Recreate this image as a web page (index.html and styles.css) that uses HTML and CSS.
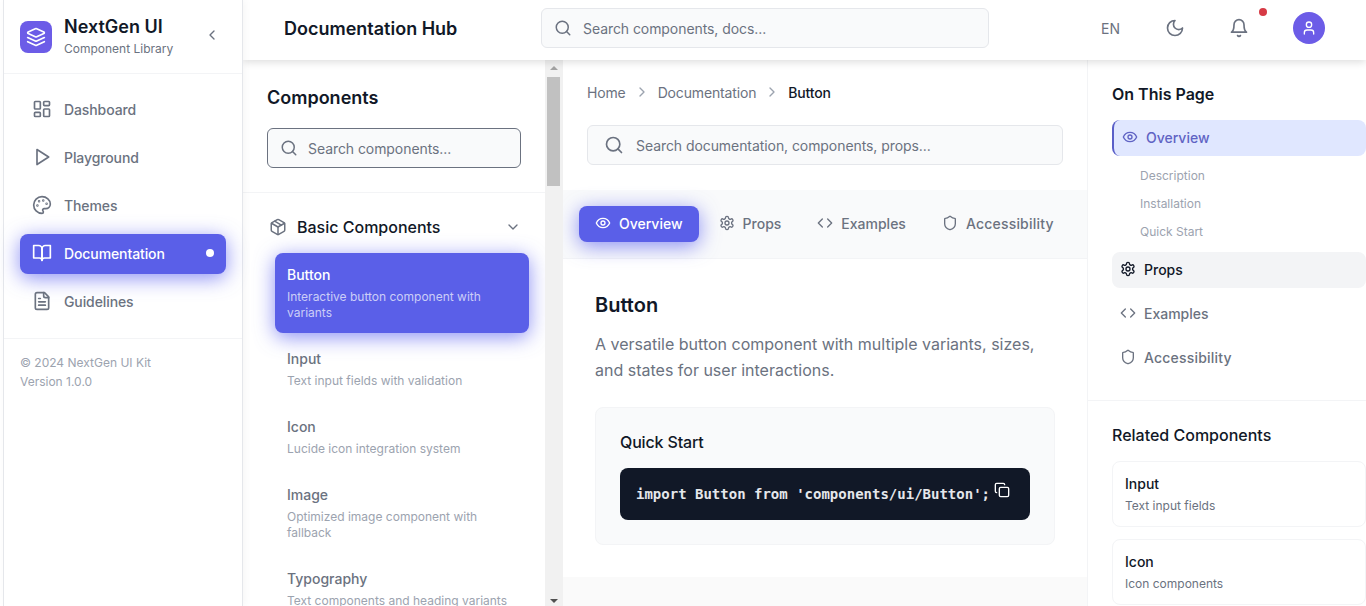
FILE: index.html
```html
<!DOCTYPE html>
<html lang="en">
<head>
    <meta charset="UTF-8">
    <meta name="viewport" content="width=device-width, initial-scale=1.0">
    <title>NextGen UI - Documentation Hub</title>
    <link rel="stylesheet" href="styles.css">
</head>
<body>

    <svg class="sprite" aria-hidden="true">
        <symbol id="i-layers" viewBox="0 0 24 24"><path d="m12.83 2.18a2 2 0 0 0-1.66 0L2.6 6.08a1 1 0 0 0 0 1.83l8.58 3.91a2 2 0 0 0 1.66 0l8.58-3.9a1 1 0 0 0 0-1.83Z"/><path d="m22 17.65-9.17 4.16a2 2 0 0 1-1.66 0L2 17.65"/><path d="m22 12.65-9.17 4.16a2 2 0 0 1-1.66 0L2 12.65"/></symbol>
        <symbol id="i-left" viewBox="0 0 24 24"><path d="m15 18-6-6 6-6"/></symbol>
        <symbol id="i-right" viewBox="0 0 24 24"><path d="m9 18 6-6-6-6"/></symbol>
        <symbol id="i-down" viewBox="0 0 24 24"><path d="m6 9 6 6 6-6"/></symbol>
        <symbol id="i-dashboard" viewBox="0 0 24 24"><rect x="3" y="3" width="7" height="9" rx="1"/><rect x="14" y="3" width="7" height="5" rx="1"/><rect x="14" y="12" width="7" height="9" rx="1"/><rect x="3" y="16" width="7" height="5" rx="1"/></symbol>
        <symbol id="i-play" viewBox="0 0 24 24"><polygon points="6 3 20 12 6 21 6 3"/></symbol>
        <symbol id="i-palette" viewBox="0 0 24 24"><circle cx="13.5" cy="6.5" r=".5"/><circle cx="17.5" cy="10.5" r=".5"/><circle cx="8.5" cy="7.5" r=".5"/><circle cx="6.5" cy="12.5" r=".5"/><path d="M12 2C6.5 2 2 6.5 2 12s4.5 10 10 10c.926 0 1.648-.746 1.648-1.688 0-.437-.18-.835-.437-1.125-.29-.289-.438-.652-.438-1.125a1.64 1.64 0 0 1 1.668-1.668h1.996c3.051 0 5.555-2.503 5.555-5.554C21.965 6.012 17.461 2 12 2z"/></symbol>
        <symbol id="i-book" viewBox="0 0 24 24"><path d="M2 3h6a4 4 0 0 1 4 4v14a3 3 0 0 0-3-3H2z"/><path d="M22 3h-6a4 4 0 0 0-4 4v14a3 3 0 0 1 3-3h7z"/></symbol>
        <symbol id="i-file" viewBox="0 0 24 24"><path d="M15 2H6a2 2 0 0 0-2 2v16a2 2 0 0 0 2 2h12a2 2 0 0 0 2-2V7Z"/><path d="M14 2v4a2 2 0 0 0 2 2h4"/><path d="M10 9H8"/><path d="M16 13H8"/><path d="M16 17H8"/></symbol>
        <symbol id="i-search" viewBox="0 0 24 24"><circle cx="11" cy="11" r="8"/><path d="m21 21-4.3-4.3"/></symbol>
        <symbol id="i-moon" viewBox="0 0 24 24"><path d="M12 3a6 6 0 0 0 9 9 9 9 0 1 1-9-9Z"/></symbol>
        <symbol id="i-bell" viewBox="0 0 24 24"><path d="M6 8a6 6 0 0 1 12 0c0 7 3 9 3 9H3s3-2 3-9"/><path d="M10.3 21a1.94 1.94 0 0 0 3.4 0"/></symbol>
        <symbol id="i-user" viewBox="0 0 24 24"><path d="M19 21v-2a4 4 0 0 0-4-4H9a4 4 0 0 0-4 4v2"/><circle cx="12" cy="7" r="4"/></symbol>
        <symbol id="i-eye" viewBox="0 0 24 24"><path d="M2 12s3-7 10-7 10 7 10 7-3 7-10 7-10-7-10-7Z"/><circle cx="12" cy="12" r="3"/></symbol>
        <symbol id="i-settings" viewBox="0 0 24 24"><path d="M12.22 2h-.44a2 2 0 0 0-2 2v.18a2 2 0 0 1-1 1.73l-.43.25a2 2 0 0 1-2 0l-.15-.08a2 2 0 0 0-2.73.73l-.22.38a2 2 0 0 0 .73 2.73l.15.1a2 2 0 0 1 1 1.72v.51a2 2 0 0 1-1 1.74l-.15.09a2 2 0 0 0-.73 2.73l.22.38a2 2 0 0 0 2.73.73l.15-.08a2 2 0 0 1 2 0l.43.25a2 2 0 0 1 1 1.73V20a2 2 0 0 0 2 2h.44a2 2 0 0 0 2-2v-.18a2 2 0 0 1 1-1.73l.43-.25a2 2 0 0 1 2 0l.15.08a2 2 0 0 0 2.73-.73l.22-.39a2 2 0 0 0-.73-2.73l-.15-.08a2 2 0 0 1-1-1.74v-.5a2 2 0 0 1 1-1.74l.15-.09a2 2 0 0 0 .73-2.73l-.22-.38a2 2 0 0 0-2.73-.73l-.15.08a2 2 0 0 1-2 0l-.43-.25a2 2 0 0 1-1-1.73V4a2 2 0 0 0-2-2z"/><circle cx="12" cy="12" r="3"/></symbol>
        <symbol id="i-code" viewBox="0 0 24 24"><polyline points="16 18 22 12 16 6"/><polyline points="8 6 2 12 8 18"/></symbol>
        <symbol id="i-shield" viewBox="0 0 24 24"><path d="M20 13c0 5-3.5 7.5-7.66 8.95a1 1 0 0 1-.67-.01C7.5 20.5 4 18 4 13V6a1 1 0 0 1 1-1c2 0 4.5-1.2 6.24-2.72a1.17 1.17 0 0 1 1.52 0C14.51 3.81 17 5 19 5a1 1 0 0 1 1 1z"/></symbol>
        <symbol id="i-package" viewBox="0 0 24 24"><path d="M11 21.73a2 2 0 0 0 2 0l7-4A2 2 0 0 0 21 16V8a2 2 0 0 0-1-1.73l-7-4a2 2 0 0 0-2 0l-7 4A2 2 0 0 0 3 8v8a2 2 0 0 0 1 1.73z"/><path d="M12 22V12"/><path d="m3.3 7 8.7 5 8.7-5"/><path d="m7.5 4.27 9 5.15"/></symbol>
        <symbol id="i-copy" viewBox="0 0 24 24"><rect x="8" y="8" width="14" height="14" rx="2"/><path d="M4 16c-1.1 0-2-.9-2-2V4c0-1.1.9-2 2-2h10c1.1 0 2 .9 2 2"/></symbol>
    </svg>

    <div class="app">
        <aside class="sidebar">
            <div class="brand">
                <div class="brand-logo"><svg class="icon icon-20"><use href="#i-layers"/></svg></div>
                <div class="brand-text">
                    <div class="brand-name">NextGen UI</div>
                    <div class="brand-sub">Component Library</div>
                </div>
                <svg class="icon icon-16 brand-toggle"><use href="#i-left"/></svg>
            </div>

            <nav class="nav">
                <a class="nav-item"><svg class="icon icon-20"><use href="#i-dashboard"/></svg>Dashboard</a>
                <a class="nav-item"><svg class="icon icon-20"><use href="#i-play"/></svg>Playground</a>
                <a class="nav-item"><svg class="icon icon-20"><use href="#i-palette"/></svg>Themes</a>
                <a class="nav-item active"><svg class="icon icon-20"><use href="#i-book"/></svg>Documentation<span class="nav-dot"></span></a>
                <a class="nav-item"><svg class="icon icon-20"><use href="#i-file"/></svg>Guidelines</a>
            </nav>

            <div class="sidebar-foot">
                <div>© 2024 NextGen UI Kit</div>
                <div>Version 1.0.0</div>
            </div>
        </aside>

        <div class="page">
            <header class="topbar">
                <h1 class="topbar-title">Documentation Hub</h1>
                <div class="search topbar-search">
                    <svg class="icon icon-18"><use href="#i-search"/></svg>
                    <span>Search components, docs...</span>
                </div>
                <div class="topbar-actions">
                    <span class="lang">EN</span>
                    <svg class="icon icon-20 act-moon"><use href="#i-moon"/></svg>
                    <span class="bell">
                        <svg class="icon icon-20"><use href="#i-bell"/></svg>
                        <span class="bell-dot"></span>
                    </span>
                    <span class="avatar"><svg class="icon icon-16"><use href="#i-user"/></svg></span>
                </div>
            </header>

            <div class="columns">
                <section class="library">
                    <div class="library-scroll">
                        <div class="library-head">
                            <h2>Components</h2>
                            <div class="search library-search">
                                <svg class="icon icon-18"><use href="#i-search"/></svg>
                                <span>Search components...</span>
                            </div>
                        </div>

                        <div class="group">
                            <div class="group-head">
                                <svg class="icon icon-18"><use href="#i-package"/></svg>
                                <span>Basic Components</span>
                                <svg class="icon icon-16 group-chev"><use href="#i-down"/></svg>
                            </div>
                            <div class="group-items">
                                <div class="comp active">
                                    <div class="comp-name">Button</div>
                                    <div class="comp-desc">Interactive button component with variants</div>
                                </div>
                                <div class="comp">
                                    <div class="comp-name">Input</div>
                                    <div class="comp-desc">Text input fields with validation</div>
                                </div>
                                <div class="comp">
                                    <div class="comp-name">Icon</div>
                                    <div class="comp-desc">Lucide icon integration system</div>
                                </div>
                                <div class="comp">
                                    <div class="comp-name">Image</div>
                                    <div class="comp-desc">Optimized image component with fallback</div>
                                </div>
                                <div class="comp">
                                    <div class="comp-name">Typography</div>
                                    <div class="comp-desc">Text components and heading variants</div>
                                </div>
                            </div>
                        </div>
                    </div>

                    <div class="scrollbar">
                        <span class="scroll-arrow up"></span>
                        <span class="scroll-thumb"></span>
                        <span class="scroll-track"></span>
                        <span class="scroll-arrow down"></span>
                    </div>
                </section>

                <main class="doc">
                    <div class="doc-head">
                        <div class="crumbs">
                            <span>Home</span>
                            <svg class="icon icon-16"><use href="#i-right"/></svg>
                            <span>Documentation</span>
                            <svg class="icon icon-16"><use href="#i-right"/></svg>
                            <span class="crumb-current">Button</span>
                        </div>
                        <div class="search doc-search">
                            <svg class="icon icon-20"><use href="#i-search"/></svg>
                            <span>Search documentation, components, props...</span>
                        </div>
                    </div>

                    <div class="tabs">
                        <a class="tab active"><svg class="icon icon-16"><use href="#i-eye"/></svg>Overview</a>
                        <a class="tab"><svg class="icon icon-16"><use href="#i-settings"/></svg>Props</a>
                        <a class="tab"><svg class="icon icon-16"><use href="#i-code"/></svg>Examples</a>
                        <a class="tab wide"><svg class="icon icon-16"><use href="#i-shield"/></svg>Accessibility</a>
                    </div>

                    <div class="doc-body">
                        <h2>Button</h2>
                        <p>A versatile button component with multiple variants, sizes, and states for user interactions.</p>
                        <div class="quick">
                            <h3>Quick Start</h3>
                            <div class="code">
                                <code>import Button from 'components/ui/Button';</code>
                                <svg class="icon icon-16 code-copy"><use href="#i-copy"/></svg>
                            </div>
                        </div>
                    </div>

                    <div class="doc-next"></div>
                </main>

                <aside class="toc">
                    <div class="toc-main">
                        <h3>On This Page</h3>
                        <a class="toc-item active"><svg class="icon icon-16"><use href="#i-eye"/></svg>Overview</a>
                        <div class="toc-sub">
                            <a>Description</a>
                            <a>Installation</a>
                            <a>Quick Start</a>
                        </div>
                        <div class="toc-list">
                            <a class="toc-item hover"><svg class="icon icon-16"><use href="#i-settings"/></svg>Props</a>
                            <a class="toc-item"><svg class="icon icon-16"><use href="#i-code"/></svg>Examples</a>
                            <a class="toc-item wide"><svg class="icon icon-16"><use href="#i-shield"/></svg>Accessibility</a>
                        </div>
                    </div>
                    <div class="related">
                        <h3>Related Components</h3>
                        <div class="related-card">
                            <div class="related-name">Input</div>
                            <div class="related-desc">Text input fields</div>
                        </div>
                        <div class="related-card">
                            <div class="related-name">Icon</div>
                            <div class="related-desc">Icon components</div>
                        </div>
                    </div>
                </aside>
            </div>
        </div>
    </div>

</body>
</html>
```

FILE: styles.css
```css
* {
    box-sizing: border-box;
}

html, body {
    height: 100%;
}

body {
    margin: 0;
    font-family: Inter, "Noto Sans", sans-serif;
    font-size: 14px;
    color: #111827;
    background: #fff;
    overflow: hidden;
}

h1, h2, h3, p {
    margin: 0;
}

.sprite {
    display: none;
}

.icon {
    flex: none;
    fill: none;
    stroke: currentColor;
    stroke-width: 2;
    stroke-linecap: round;
    stroke-linejoin: round;
}

.icon-16 { width: 16px; height: 16px; }
.icon-18 { width: 18px; height: 18px; }
.icon-20 { width: 20px; height: 20px; }

.wide {
    letter-spacing: 0.2px;
}

.app {
    display: flex;
    height: 606px;
    padding-left: 3px;
}

/* left sidebar */
.sidebar {
    position: relative;
    z-index: 3;
    flex: none;
    width: 240px;
    background: #fff;
    border-left: 1px solid #e5e7eb;
    border-right: 1px solid #e5e7eb;
    box-shadow: 2px 0 8px rgba(0, 0, 0, 0.04);
}

.brand {
    display: flex;
    align-items: center;
    height: 74px;
    padding: 0 16px;
    border-bottom: 1px solid #f3f4f6;
}

.brand-logo {
    display: flex;
    align-items: center;
    justify-content: center;
    width: 32px;
    height: 32px;
    margin-right: 12px;
    border-radius: 8px;
    background: #6c5ce7;
    color: #fff;
}

.brand-text {
    flex: 1;
}

.brand-name {
    font-size: 18px;
    font-weight: 600;
    line-height: 24px;
}

.brand-sub {
    margin-top: 1px;
    font-size: 12px;
    line-height: 18px;
    color: #6b7280;
}

.brand-toggle {
    margin: 0 6px 4px 0;
    color: #6b7280;
}

.nav {
    display: flex;
    flex-direction: column;
    gap: 8px;
    padding: 16px 16px;
    border-bottom: 1px solid #f3f4f6;
}

.nav-item {
    display: flex;
    align-items: center;
    gap: 12px;
    height: 40px;
    padding: 0 12px 2px;
    border-radius: 8px;
    font-weight: 500;
    letter-spacing: -0.1px;
    color: #6b7280;
}

.nav-item.active {
    background: #5a5fe8;
    color: #fff;
    box-shadow: 0 4px 20px rgba(90, 95, 240, 0.7);
}

.nav-dot {
    width: 8px;
    height: 8px;
    margin-left: auto;
    border-radius: 50%;
    background: #fff;
}

.sidebar-foot {
    padding: 14px 16px;
    font-size: 12px;
    line-height: 19px;
    color: #9ca3af;
}

/* top bar */
.page {
    flex: 1;
    display: flex;
    flex-direction: column;
    min-width: 0;
}

.topbar {
    position: relative;
    z-index: 2;
    flex: none;
    display: flex;
    align-items: center;
    height: 60px;
    padding: 0 41px 4px 41px;
    background: #fff;
    box-shadow: 0 2px 8px rgba(0, 0, 0, 0.14);
}

.topbar-title {
    width: 257px;
    font-size: 18px;
    font-weight: 600;
}

.search {
    display: flex;
    align-items: center;
    background: #f9fafb;
    border: 1px solid #e5e7eb;
    border-radius: 6px;
    color: #6b7280;
}

.search span {
    letter-spacing: -0.07px;
}

.topbar-search {
    gap: 11px;
    width: 448px;
    height: 40px;
    padding: 0 12px;
}

.topbar-actions {
    display: flex;
    align-items: center;
    margin-left: auto;
    color: #6b7280;
}

.lang {
    margin-right: 45px;
}

.act-moon {
    margin-right: 44px;
}

.bell {
    position: relative;
    display: flex;
    margin-right: 44px;
}

.bell-dot {
    position: absolute;
    top: -10px;
    right: -18px;
    width: 8px;
    height: 8px;
    border-radius: 50%;
    background: #d63a45;
}

.avatar {
    display: flex;
    align-items: center;
    justify-content: center;
    width: 32px;
    height: 32px;
    border-radius: 50%;
    background: #6c5ce7;
    color: #fff;
}

.columns {
    flex: 1;
    display: flex;
    min-height: 0;
}

/* component list */
.library {
    flex: none;
    display: flex;
    width: 320px;
}

.library-scroll {
    flex: 1;
    min-width: 0;
    overflow: hidden;
}

.library-head {
    padding: 26px 24px 24px;
    border-bottom: 1px solid #f3f4f6;
}

.library-head h2 {
    margin-bottom: 18px;
    font-size: 18px;
    font-weight: 600;
    line-height: 24px;
}

.library-search {
    gap: 10px;
    height: 40px;
    padding: 0 12px;
    border-color: #6b7280;
}

.group {
    padding: 23px 24px 0;
}

.group-head {
    display: flex;
    align-items: center;
    gap: 10px;
    height: 22px;
    margin-bottom: 15px;
    padding-left: 2px;
    font-size: 16px;
    font-weight: 500;
}

.group-head > .icon:first-child {
    color: #6b7280;
}

.group-chev {
    margin-left: auto;
    color: #6b7280;
}

.group-items {
    display: flex;
    flex-direction: column;
    gap: 4px;
    margin: 0 -8px 0 8px;
}

.comp {
    padding: 12px;
    border-radius: 8px;
}

.comp-name {
    font-weight: 500;
    line-height: 20px;
    color: #6b7280;
}

.comp-desc {
    margin-top: 4px;
    font-size: 12px;
    line-height: 16px;
    color: #9ca3af;
}

.comp.active {
    background: #5a5fe8;
    box-shadow: 0 4px 20px rgba(90, 95, 240, 0.7);
}

.comp.active .comp-name {
    color: #fff;
}

.comp.active .comp-desc {
    color: rgba(255, 255, 255, 0.7);
}

.scrollbar {
    flex: none;
    display: flex;
    flex-direction: column;
    align-items: center;
    width: 18px;
    padding-right: 1px;
    background: #f1f1f1;
}

.scroll-arrow {
    flex: none;
    width: 0;
    height: 0;
    border-left: 4px solid transparent;
    border-right: 4px solid transparent;
}

.scroll-arrow.up {
    margin: 6px 0 5px;
    border-bottom: 4px solid #a3a3a3;
}

.scroll-arrow.down {
    margin: 5px 0 3px;
    border-top: 4px solid #505050;
}

.scroll-thumb {
    flex: none;
    width: 13px;
    height: 109px;
    margin-top: 2px;
    background: #c1c1c1;
}

.scroll-track {
    flex: 1;
}

/* documentation column */
.doc {
    flex: none;
    display: flex;
    flex-direction: column;
    width: 525px;
    border-right: 1px solid #f3f4f6;
    overflow: hidden;
}

.doc-head {
    padding: 22px 24px 25px;
}

.crumbs {
    display: flex;
    align-items: center;
    gap: 8px;
    height: 20px;
    margin-bottom: 23px;
    letter-spacing: -0.15px;
    color: #6b7280;
}

.crumbs .icon {
    color: #9ca3af;
}

.crumb-current {
    font-weight: 500;
    color: #111827;
}

.doc-search {
    gap: 12px;
    height: 40px;
    padding: 0 16px;
}

.tabs {
    display: flex;
    gap: 4px;
    height: 69px;
    padding: 16px;
    background: #f9fafb;
    border-bottom: 1px solid #f3f4f6;
}

.tab {
    display: flex;
    align-items: center;
    gap: 8px;
    height: 36px;
    padding: 0 16px 2px;
    border-radius: 8px;
    font-weight: 500;
    color: #6b7280;
}

.tab.active {
    background: #5a5fe8;
    color: #fff;
    box-shadow: 0 4px 20px rgba(90, 95, 240, 0.7);
}

.doc-body {
    flex: none;
    padding: 32px 32px;
}

.doc-body h2 {
    margin-bottom: 12px;
    font-size: 20px;
    font-weight: 600;
    line-height: 28px;
}

.doc-body p {
    margin-bottom: 24px;
    font-size: 16px;
    line-height: 26px;
    color: #6b7280;
}

.quick {
    padding: 24px;
    background: #f9fafb;
    border: 1px solid #f3f4f6;
    border-radius: 8px;
}

.quick h3 {
    margin-bottom: 16px;
    font-size: 16px;
    font-weight: 500;
    line-height: 20px;
    letter-spacing: -0.15px;
}

.code {
    position: relative;
    padding: 16px;
    background: #111827;
    border-radius: 8px;
    color: #e5e7eb;
}

.code code {
    font-family: "DejaVu Sans Mono", "Liberation Mono", monospace;
    font-size: 14px;
    font-weight: 700;
    line-height: 20px;
}

.code-copy {
    position: absolute;
    top: 14px;
    right: 20px;
    color: #fff;
}

.doc-next {
    flex: 1;
    background: #fafafa;
}

/* right column */
.toc {
    flex: 1;
    min-width: 0;
}

.toc-main {
    padding: 23px 0 24px 24px;
    border-bottom: 1px solid #f3f4f6;
}

.toc-main h3 {
    margin-bottom: 15px;
    font-size: 16px;
    font-weight: 600;
    line-height: 22px;
}

.toc-item {
    display: flex;
    align-items: center;
    gap: 8px;
    height: 36px;
    padding: 0 8px 2px;
    border-radius: 8px;
    font-weight: 500;
    color: #6b7280;
}

.toc-item.active {
    background: #e0e7ff;
    border-left: 2px solid #5a5fc8;
    color: #5f63c4;
}

.toc-item.hover {
    background: #f3f4f6;
    color: #111827;
}

.toc-sub {
    display: flex;
    flex-direction: column;
    margin: 6px 0;
    padding-left: 28px;
    font-size: 12px;
    line-height: 28px;
    color: #9ca3af;
}

.toc-list {
    display: flex;
    flex-direction: column;
    gap: 8px;
}

.related {
    padding: 23px 0 0 24px;
}

.related h3 {
    margin-bottom: 15px;
    font-size: 16px;
    font-weight: 500;
    line-height: 22px;
}

.related-card {
    height: 66px;
    margin-bottom: 12px;
    padding: 12px;
    border: 1px solid #f3f4f6;
    border-radius: 8px;
}

.related-name {
    font-weight: 500;
    line-height: 20px;
}

.related-desc {
    margin-top: 3px;
    font-size: 12px;
    line-height: 18px;
    color: #6b7280;
}
```
